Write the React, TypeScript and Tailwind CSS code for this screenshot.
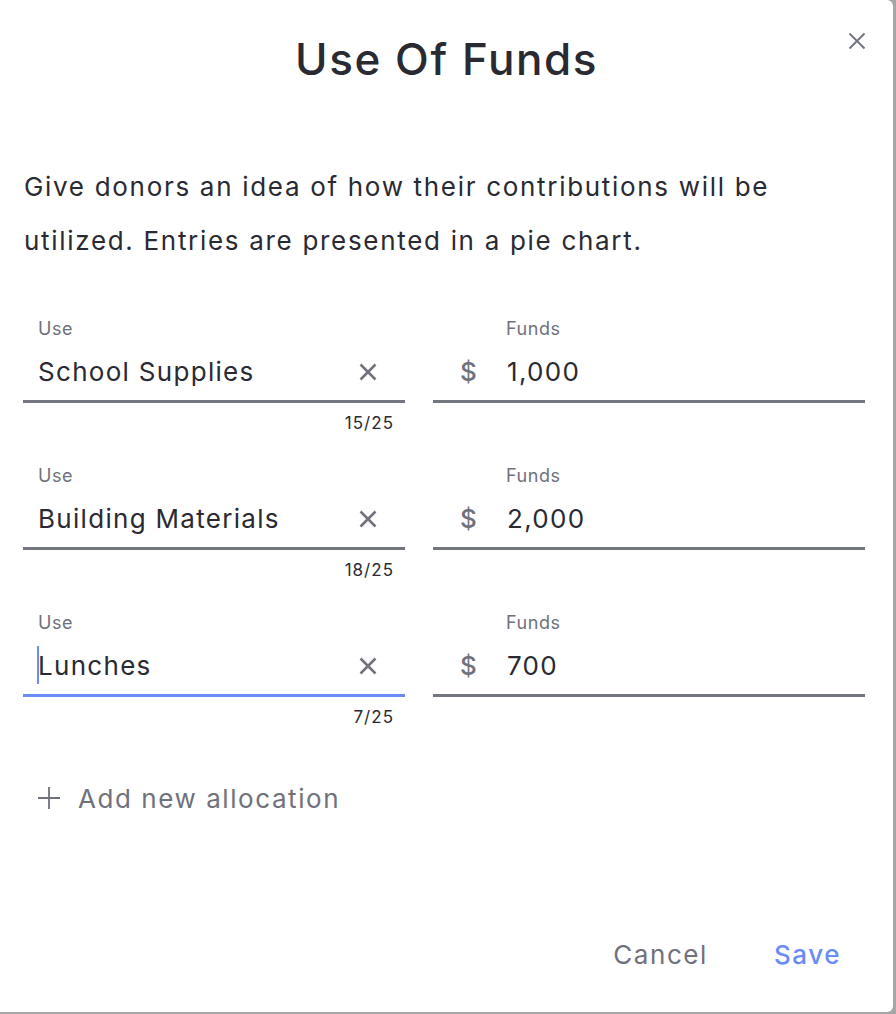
type Allocation = {
  use: string
  funds: string
  focused?: boolean
}

const allocations: Allocation[] = [
  { use: "School Supplies", funds: "1,000" },
  { use: "Building Materials", funds: "2,000" },
  { use: "Lunches", funds: "700", focused: true },
]

function XIcon({ className, width }: { className?: string; width: number }) {
  return (
    <svg viewBox="0 0 24 24" className={className} fill="none" stroke="currentColor" strokeWidth={width} strokeLinecap="butt">
      <path d="M3 3 21 21M21 3 3 21" />
    </svg>
  )
}

function PlusIcon({ className }: { className?: string }) {
  return (
    <svg viewBox="0 0 22 22" className={className} fill="none" stroke="currentColor" strokeWidth={1.8}>
      <path d="M11 0v22M0 11h22" />
    </svg>
  )
}

function AllocationRow({ item }: { item: Allocation }) {
  return (
    <div className="flex gap-[28px]">
      {/* Use field */}
      <div className="w-[382px] shrink-0">
        <div className="pl-[15px] text-[18px] leading-[24px] tracking-[0.03em] text-[#6f717c]">Use</div>
        <div
          className={
            item.focused
              ? "flex h-[62px] items-center border-b-[3px] border-[#6b8cf7] pl-[15px] pr-[27px]"
              : "flex h-[62px] items-center border-b-[3px] border-[#73757f] pl-[15px] pr-[27px]"
          }
        >
          <div className="relative mt-[3px] flex-1 text-[26px] leading-[36px] tracking-[0.05em] text-[#2a2a33]">
            {item.focused && <span className="absolute -left-[1px] top-[-2px] h-[38px] w-[2px] bg-[#6b8cf7]" />}
            {item.use}
          </div>
          <XIcon className="mt-[2px] h-[20px] w-[20px] text-[#6f717c]" width={3} />
        </div>
        <div className="h-[30px] pr-[11px] text-right text-[17px] leading-[40px] tracking-[0.06em] text-[#2a2a33]">
          {item.use.length}/25
        </div>
      </div>

      {/* Funds field */}
      <div className="flex-1">
        <div className="pl-[73px] text-[18px] leading-[24px] tracking-[0.03em] text-[#6f717c]">Funds</div>
        <div className="flex h-[62px] items-center border-b-[3px] border-[#73757f] pl-[27px]">
          <span className="mt-[3px] w-[47px] text-[26px] leading-[36px] font-medium text-[#6f717c]">$</span>
          <span className="mt-[3px] text-[26px] leading-[36px] tracking-[0.05em] text-[#2a2a33]">{item.funds}</span>
        </div>
      </div>
    </div>
  )
}

export default function App() {
  return (
    <div className="flex h-[1014px] w-[896px] bg-[#a6a6a6] [font-family:Inter,'Noto_Sans',sans-serif]">
      <div className="relative flex h-[1012px] w-[893px] flex-col rounded-tr-[6px] rounded-br-[6px] bg-white">
        {/* Header */}
        <div className="flex h-[120px] items-center justify-center pb-[2px]">
          <h1 className="text-[44px] leading-[56px] font-medium tracking-[0.035em] text-[#2a2a33]">Use Of Funds</h1>
        </div>
        <button className="absolute right-[26px] top-[31px] text-[#6f717c]">
          <XIcon className="h-[20px] w-[20px]" width={2.2} />
        </button>

        {/* Description */}
        <p className="mt-[40px] w-[820px] pl-[24px] text-[26px] leading-[54px] tracking-[0.065em] text-[#2a2a33]">
          Give donors an idea of how their contributions will be utilized. Entries are presented in a pie chart.
        </p>

        {/* Allocations */}
        <div className="mt-[49px] flex flex-col gap-[31px] pl-[23px] pr-[28px]">
          {allocations.map((item) => (
            <AllocationRow key={item.use} item={item} />
          ))}
        </div>

        <button className="mt-[51px] flex h-[40px] items-center gap-[18px] pl-[38px] text-[26px] tracking-[0.06em] text-[#6f717c]">
          <PlusIcon className="h-[22px] w-[22px]" />
          Add new allocation
        </button>

        {/* Footer */}
        <div className="mt-auto mb-[39px] flex justify-end gap-[66px] pr-[52px]">
          <button className="text-[26px] leading-[36px] tracking-[0.06em] text-[#6f717c]">Cancel</button>
          <button className="text-[26px] leading-[36px] font-medium tracking-[0.06em] text-[#6b8cf7]">Save</button>
        </div>
      </div>
    </div>
  )
}
